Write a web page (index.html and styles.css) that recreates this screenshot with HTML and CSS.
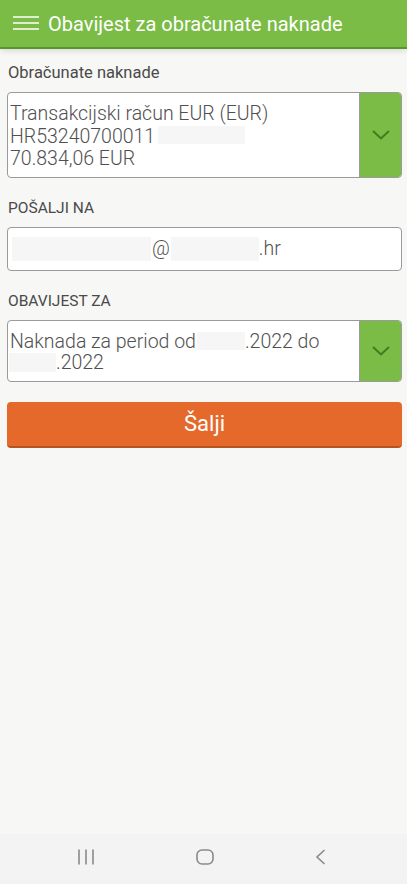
FILE: index.html
```html
<!DOCTYPE html>
<html lang="hr">
<head>
<meta charset="utf-8">
<title>Obavijest za obračunate naknade</title>
<link rel="stylesheet" href="styles.css">
</head>
<body>
<header class="topbar">
  <svg class="menu-icon" width="26" height="14" viewBox="0 0 26 14" aria-hidden="true">
    <path d="M0 1h26M0 7h26M0 13h26" stroke="#fff" stroke-width="1.6" fill="none"/>
  </svg>
  <h1 class="title">Obavijest za obračunate naknade</h1>
</header>
<main class="content">
  <div class="field">
    <div class="label">Obračunate naknade</div>
    <div class="select select-tall">
      <div class="select-text lh-a">
        Transakcijski račun EUR (EUR)<br>
        HR53240700011<span class="redact r-iban"></span><br>
        70.834,06 EUR
      </div>
      <div class="select-btn">
        <svg width="18" height="10" viewBox="0 0 18 10" aria-hidden="true"><path d="M1 1l8 7.5L17 1" stroke="#3d7f1c" stroke-width="2" fill="none"/></svg>
      </div>
    </div>
  </div>
  <div class="field">
    <div class="label caps">POŠALJI NA</div>
    <div class="input">
      <span class="redact r-user"></span>@<span class="redact r-domain"></span>.hr
    </div>
  </div>
  <div class="field">
    <div class="label caps">OBAVIJEST ZA</div>
    <div class="select">
      <div class="select-text lh-b">
        Naknada za period od<span class="redact r-date1"></span>.2022 do<br>
        <span class="redact r-date2"></span>.2022
      </div>
      <div class="select-btn">
        <svg width="18" height="10" viewBox="0 0 18 10" aria-hidden="true"><path d="M1 1l8 7.5L17 1" stroke="#3d7f1c" stroke-width="2" fill="none"/></svg>
      </div>
    </div>
  </div>
  <button class="send">Šalji</button>
</main>
<nav class="sysnav">
  <svg width="18" height="16" viewBox="0 0 18 16" aria-hidden="true"><path d="M2 0.5v15M9 0.5v15M16 0.5v15" stroke="#8a8a8a" stroke-width="1.6" fill="none"/></svg>
  <svg width="18" height="16" viewBox="0 0 18 16" aria-hidden="true"><rect x="1" y="1" width="16" height="14" rx="5" stroke="#8a8a8a" stroke-width="1.6" fill="none"/></svg>
  <svg width="11" height="16" viewBox="0 0 11 16" aria-hidden="true"><path d="M9.5 1L2 8l7.5 7" stroke="#8a8a8a" stroke-width="1.6" fill="none"/></svg>
</nav>
</body>
</html>
```

FILE: styles.css
```css
html, body {
  margin: 0;
  padding: 0;
}
body {
  height: 884px;
  display: flex;
  flex-direction: column;
  background: #f7f7f5;
  font-family: Roboto, "Noto Sans", "Liberation Sans", sans-serif;
  color: #444;
}
.topbar {
  height: 47px;
  background: #7abc45;
  border-bottom: 2px solid #55982e;
  box-shadow: 0 2px 6px rgba(0, 0, 0, 0.12);
  display: flex;
  align-items: center;
  padding-left: 13px;
  gap: 9px;
  flex-shrink: 0;
}
.menu-icon {
  display: block;
  margin-top: -1px;
}
.title {
  margin: 0;
  font-size: 20px;
  font-weight: 400;
  color: #fff;
  line-height: 24px;
}
.content {
  flex: 1;
  padding: 14px 5px 0 7px;
  display: flex;
  flex-direction: column;
}
.field {
  display: flex;
  flex-direction: column;
  margin-bottom: 20px;
}
.label {
  font-size: 16.5px;
  line-height: 20px;
  color: #4a4a4a;
  margin-bottom: 9px;
  padding-left: 1px;
}
.label.caps {
  font-size: 15.5px;
}
.select {
  display: flex;
  background: #fff;
  border: 1px solid #9a9a9a;
  border-radius: 4px;
  overflow: hidden;
}
.select-text {
  flex: 1;
  font-size: 19.5px;
  font-weight: 300;
  color: #505050;
  padding: 10px 4px 6px 2px;
}
.lh-a {
  line-height: 22.5px;
}
.lh-b {
  line-height: 21px;
  padding-top: 10px;
  padding-bottom: 8px;
}
.select-btn {
  width: 41px;
  background: #7abc45;
  border-left: 1px solid #9a9a9a;
  display: flex;
  align-items: center;
  justify-content: center;
  flex-shrink: 0;
}
.select-btn svg {
  display: block;
}
.input {
  height: 42px;
  background: #fff;
  border: 1px solid #9a9a9a;
  border-radius: 4px;
  font-size: 19.5px;
  font-weight: 300;
  line-height: 42px;
  color: #505050;
  padding-left: 4px;
}
.redact {
  display: inline-block;
  background: #f6f6f6;
  vertical-align: -5px;
  height: 20px;
}
.r-iban { width: 87px; margin-left: 3px; height: 18px; vertical-align: -1px; }
.r-user { width: 139px; height: 24px; vertical-align: -6px; margin-right: 1px; }
.r-domain { width: 88px; height: 24px; vertical-align: -6px; margin-left: 1px; }
.r-date1 { width: 48px; height: 18px; vertical-align: -2px; margin-left: 1px; }
.r-date2 { width: 47px; height: 19px; vertical-align: -3px; margin-left: -1px; }
.send {
  height: 46px;
  margin-top: 0;
  background: #e4692b;
  border: none;
  border-bottom: 2px solid #b5541f;
  border-radius: 4px;
  color: #fff;
  font-family: Roboto, "Noto Sans", "Liberation Sans", sans-serif;
  font-size: 22px;
  padding: 0;
  width: 100%;
}
.sysnav {
  height: 46px;
  background: #f3f3f3;
  display: flex;
  align-items: center;
  justify-content: space-between;
  padding: 0 81px 4px 77px;
  flex-shrink: 0;
}
.sysnav svg {
  display: block;
}
```
